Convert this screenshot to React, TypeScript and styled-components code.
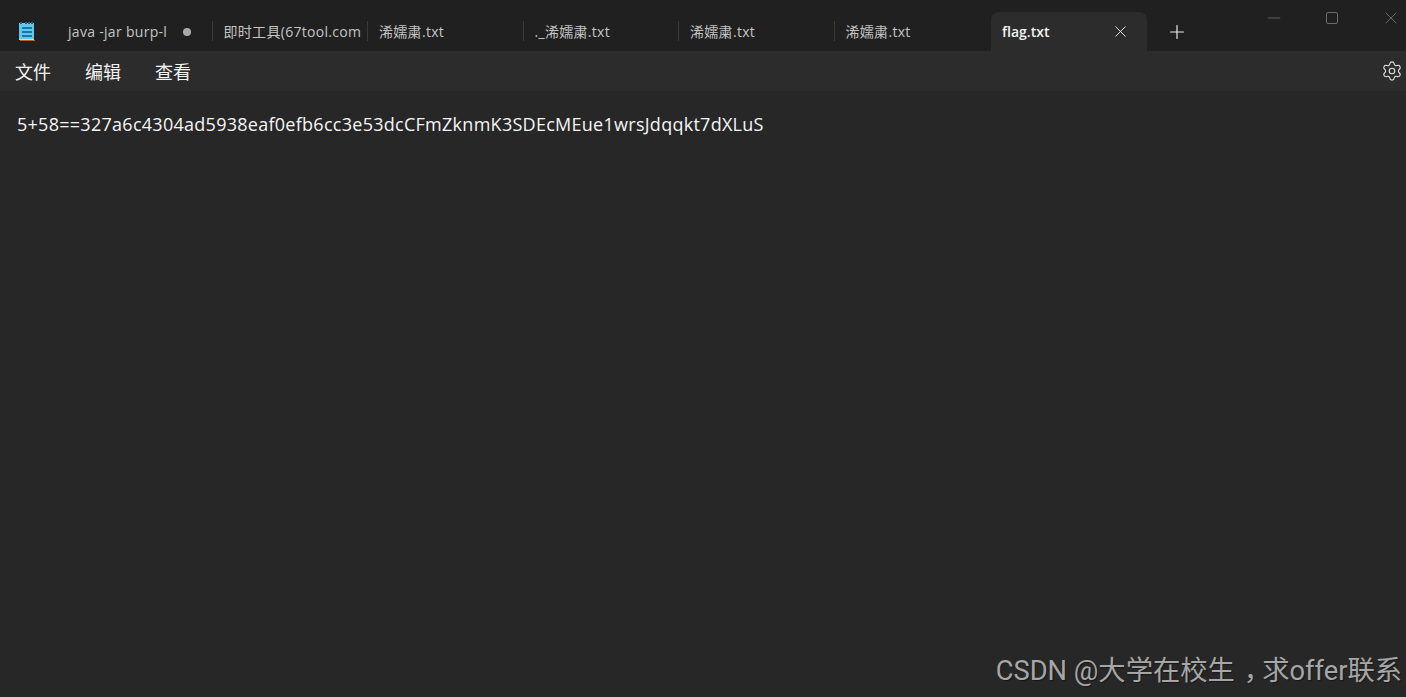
import React from 'react'
import styled, { createGlobalStyle } from 'styled-components'
import { X, Plus, Minus, Settings } from 'lucide-react'

const tabs = [
  { title: 'java -jar burp-l', dirty: true },
  { title: '即时工具(67tool.com' },
  { title: '浠嬬粛.txt' },
  { title: '._浠嬬粛.txt' },
  { title: '浠嬬粛.txt' },
  { title: '浠嬬粛.txt' },
]

const NotepadIcon = () => (
  <svg width="17" height="19" viewBox="0 0 17 19">
    <rect x="1" y="1" width="15" height="16" fill="#63c6ea" />
    <rect x="1" y="17" width="15" height="1" fill="#d8d8d8" />
    <rect x="2" y="18" width="15" height="1.6" fill="#b5621b" />
    <rect x="2" y="0" width="2" height="2" fill="#0f6a8f" />
    <rect x="7" y="0" width="2" height="2" fill="#0f6a8f" />
    <rect x="10" y="0" width="2" height="2" fill="#0f6a8f" />
    <rect x="13" y="0" width="2" height="2" fill="#0f6a8f" />
    <rect x="4" y="5" width="10" height="2" fill="#0f7ba6" />
    <rect x="4" y="9" width="10" height="2" fill="#0f7ba6" />
    <rect x="4" y="13" width="10" height="2" fill="#0f7ba6" />
  </svg>
)

const App = () => {
  return (
    <Wrapper>
      <GlobalStyle />
      <TitleBar>
        <AppIcon>
          <NotepadIcon />
        </AppIcon>
        {tabs.map((tab, i) => (
          <Tab key={i} $last={i === tabs.length - 1}>
            <TabTitle>{tab.title}</TabTitle>
            {tab.dirty && <DirtyDot />}
          </Tab>
        ))}
        <ActiveTab>
          <ActiveTitle>flag.txt</ActiveTitle>
          <X size={19} strokeWidth={1.2} color="#e8e8e8" />
        </ActiveTab>
        <NewTab>
          <Plus size={22} strokeWidth={1.3} color="#e8e8e8" />
        </NewTab>
        <WindowButtons>
          <Minus size={20} strokeWidth={1} color="#6a6a6a" />
          <MaxBox />
          <X size={20} strokeWidth={1.1} color="#6e6e6e" />
        </WindowButtons>
      </TitleBar>
      <MenuBar>
        <MenuItems>
          <MenuItem>文件</MenuItem>
          <MenuItem>编辑</MenuItem>
          <MenuItem>查看</MenuItem>
        </MenuItems>
        <Settings size={22} strokeWidth={1.2} color="#e6e6e6" />
      </MenuBar>
      <Editor>5+58==327a6c4304ad5938eaf0efb6cc3e53dcCFmZknmK3SDEcMEue1wrsJdqqkt7dXLuS</Editor>
      <Watermark>
        CSDN @大学在校生<Comma>，</Comma>求offer联系
      </Watermark>
    </Wrapper>
  )
}

export default App

const GlobalStyle = createGlobalStyle`
html, body {
  margin: 0;
  padding: 0;
  background: #272727;
}
`
const cjk = `"Open Sans", "Noto Sans CJK SC", sans-serif`

const Wrapper = styled.div`
position: relative;
width: 1406px;
height: 697px;
overflow: hidden;
display: flex;
flex-direction: column;
background: #272727;
font-family: ${cjk};
`
const TitleBar = styled.div`
height: 51px;
flex-shrink: 0;
display: flex;
align-items: flex-end;
background: #202020;
`
const AppIcon = styled.div`
width: 56px;
height: 51px;
box-sizing: border-box;
padding: 22px 0 0 18px;
`
const Tab = styled.div<{ $last?: boolean }>`
position: relative;
width: 155.5px;
height: 39px;
box-sizing: border-box;
padding: 0 4px 0 12px;
display: flex;
align-items: center;
justify-content: space-between;
&::after {
  content: '';
  display: ${(p) => (p.$last ? 'none' : 'block')};
  position: absolute;
  right: -1px;
  top: 9px;
  width: 1px;
  height: 20px;
  background: #3a3a3a;
}
`
const TabTitle = styled.span`
font-size: 14px;
line-height: 20px;
letter-spacing: 0.3px;
color: #c4c4c4;
white-space: nowrap;
`
const DirtyDot = styled.span`
width: 8px;
height: 8px;
margin-right: 17px;
border-radius: 50%;
background: #a8a8a8;
`
const ActiveTab = styled.div`
width: 156px;
height: 39px;
margin-left: 2px;
box-sizing: border-box;
padding: 0 17px 0 11px;
display: flex;
align-items: center;
justify-content: space-between;
background: #2c2c2c;
border-radius: 8px 8px 0 0;
`
const ActiveTitle = styled.span`
font-size: 14px;
font-weight: 600;
color: #f2f2f2;
`
const NewTab = styled.div`
width: 60px;
height: 39px;
box-sizing: border-box;
display: flex;
align-items: center;
justify-content: center;
`
const WindowButtons = styled.div`
margin-left: auto;
align-self: flex-start;
width: 142px;
height: 35px;
box-sizing: border-box;
padding: 0 5px 0 0;
display: flex;
align-items: center;
justify-content: space-between;
`
const MaxBox = styled.span`
width: 10px;
height: 10px;
margin-right: 2px;
border: 1px solid #6a6a6a;
border-radius: 2px;
`
const MenuBar = styled.div`
height: 40px;
flex-shrink: 0;
box-sizing: border-box;
padding: 0 3px 0 15px;
display: flex;
align-items: center;
justify-content: space-between;
background: #2c2c2c;
`
const MenuItems = styled.div`
display: flex;
gap: 34px;
`
const MenuItem = styled.span`
font-size: 18px;
color: #f4f4f4;
`
const Editor = styled.div`
flex: 1;
padding: 21px 17px;
font-size: 18px;
line-height: 24px;
letter-spacing: 0.27px;
color: #f5f5f5;
white-space: pre;
`
const Watermark = styled.div`
position: absolute;
right: 4px;
bottom: 9px;
font-family: Roboto, "Noto Sans CJK SC", sans-serif;
font-size: 27.3px;
color: #a6a6a6;
text-shadow: 1px 1px 1px rgba(0, 0, 0, 0.4);
white-space: nowrap;
`
const Comma = styled.span`
padding-left: 9px;
letter-spacing: -9px;
`
